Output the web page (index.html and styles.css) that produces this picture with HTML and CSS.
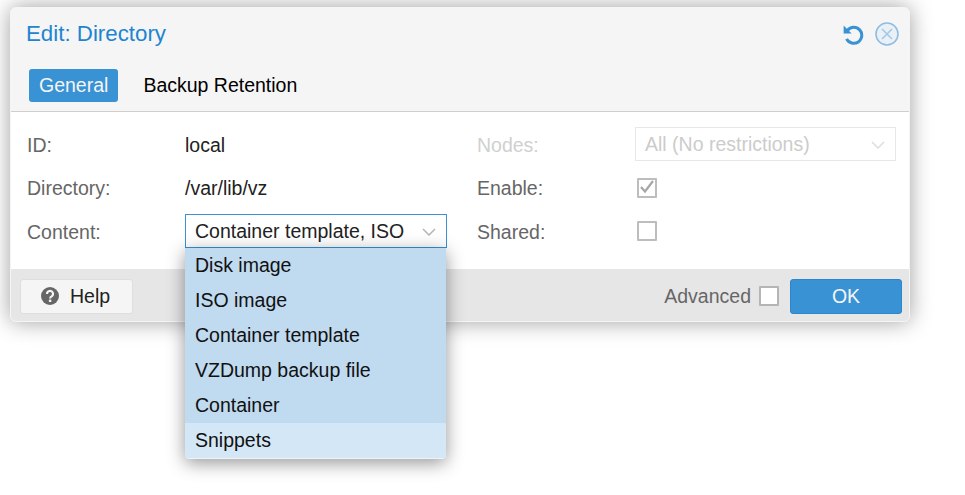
FILE: index.html
```html
<!DOCTYPE html>
<html lang="en">
<head>
  <meta charset="UTF-8">
  <title>Edit: Directory</title>
  <link rel="stylesheet" href="styles.css">
</head>
<body>
  <div class="window">
    <div class="title-bar">
      <span class="title">Edit: Directory</span>
      <svg class="tool-reset" width="22" height="22" viewBox="0 0 22 22">
        <path d="M5.6 7.2A8 8 0 1 1 4.6 15.8" fill="none" stroke="#3892d4" stroke-width="3"/>
        <path d="M1.6 2.4V10.4H9.6Z" fill="#3892d4"/>
      </svg>
      <svg class="tool-close" width="24" height="24" viewBox="0 0 24 24">
        <circle cx="12" cy="12" r="11" fill="#e9f0f6" stroke="#8fbde2" stroke-width="1.6"/>
        <path d="M7 7L17 17M17 7L7 17" stroke="#a3c9e8" stroke-width="1.6"/>
      </svg>
    </div>
    <div class="tabs">
      <span class="tab tab-active">General</span>
      <span class="tab">Backup Retention</span>
    </div>
    <div class="form">
      <div class="column column-left">
        <div class="row"><span class="label">ID:</span><span class="value">local</span></div>
        <div class="row"><span class="label">Directory:</span><span class="value">/var/lib/vz</span></div>
        <div class="row">
          <span class="label">Content:</span>
          <div class="combo combo-focus">
            <span>Container template, ISO</span>
            <svg class="chevron" width="14" height="8" viewBox="0 0 14 8"><path d="M1 1L7 7L13 1" fill="none" stroke="#b5b5b5" stroke-width="1.5"/></svg>
          </div>
        </div>
      </div>
      <div class="column column-right">
        <div class="row">
          <span class="label label-disabled">Nodes:</span>
          <div class="combo combo-disabled">
            <span>All (No restrictions)</span>
            <svg class="chevron" width="14" height="8" viewBox="0 0 14 8"><path d="M1 1L7 7L13 1" fill="none" stroke="#dedede" stroke-width="1.5"/></svg>
          </div>
        </div>
        <div class="row">
          <span class="label">Enable:</span>
          <span class="check">
            <svg width="17" height="17" viewBox="0 0 17 17"><path d="M3 8L7 12.5L15 2" fill="none" stroke="#a6a6a6" stroke-width="2.2"/></svg>
          </span>
        </div>
        <div class="row"><span class="label">Shared:</span><span class="check"></span></div>
      </div>
    </div>
    <div class="footer">
      <button class="btn btn-help">
        <svg width="18" height="18" viewBox="0 0 18 18">
          <circle cx="9" cy="9" r="9" fill="#666"/>
          <path d="M6 7A3 3 0 1 1 10.6 9.4C9.6 10 9.1 10.4 9.1 11.4" fill="none" stroke="#f5f5f5" stroke-width="2.1"/>
          <rect x="7.9" y="12.6" width="2.4" height="2.4" fill="#f5f5f5"/>
        </svg>
        Help
      </button>
      <span class="advanced">Advanced</span>
      <span class="check check-light"></span>
      <button class="btn btn-ok">OK</button>
    </div>
  </div>

  <ul class="dropdown">
    <li>Disk image</li>
    <li>ISO image</li>
    <li>Container template</li>
    <li>VZDump backup file</li>
    <li>Container</li>
    <li class="hover">Snippets</li>
  </ul>
</body>
</html>
```

FILE: styles.css
```css
body { margin: 0; min-height: 100vh; padding: 7px 0 0 10px; box-sizing: border-box; font-family: "Liberation Sans", Arial, sans-serif; font-size: 19.5px; color: #000; }
.window { width: 900px; height: 315px; box-sizing: border-box; border: 1px solid #f5f5f5; border-radius: 6px; background: #f5f5f5; box-shadow: 0 0 22px rgba(0, 0, 0, 0.38); overflow: hidden; display: flex; flex-direction: column; }

.title-bar { display: flex; align-items: center; height: 51px; flex: none; padding: 0 10px 0 15px; }
.title { flex: 1; font-size: 22.3px; color: #1d85d0; }
.tool-reset { margin-right: 11px; }

.tabs { display: flex; align-items: center; gap: 8px; height: 52px; flex: none; padding-left: 18px; border-bottom: 1px solid #cfcfcf; }
.tab { padding: 0 10px 0 17px; line-height: 33px; }
.tab-active { padding: 0 10px; border-radius: 3px; background: #3892d4; color: #f5f5f5; }

.form { display: flex; height: 157px; flex: none; padding: 15px 13px 0 16px; box-sizing: border-box; background: #fff; }
.column { display: flex; flex-direction: column; gap: 9.5px; }
.column-left { width: 450px; }
.column-right { width: 419px; }
.row { display: flex; align-items: center; height: 34px; }
.label { width: 158px; flex: none; padding-top: 2px; color: #666; }
.label-disabled { color: #d0d0d0; }
.value { padding-top: 2px; color: #222; }

.combo { flex: 1; display: flex; align-items: center; justify-content: space-between; height: 34px; padding: 1px 10px 0 9px; box-sizing: border-box; border: 1px solid #ccc; margin-right: 30px; }
.column-right .combo { margin-right: 0; }
.combo-focus { border-color: #3892d4; color: #222; }
.combo-disabled { border-color: #e8e8e8; color: #ccc; }
.chevron { flex: none; }

.check { display: block; width: 20px; height: 20px; box-sizing: border-box; flex: none; margin-left: 2px; border: 2px solid #bdbdbd; border-radius: 1px; background: #fff; }
.check svg { display: block; margin: -1px; }

.footer { flex: 1; display: flex; align-items: center; padding: 2px 7px 0 9px; background: #e6e6e6; }
.btn { height: 35px; box-sizing: border-box; border-radius: 3px; font: inherit; }
.btn-help { display: flex; align-items: center; gap: 11px; width: 113px; padding: 0 0 0 20px; margin-right: auto; border: 1px solid #dedede; background: #f5f5f5; color: #222; }
.advanced { color: #666; margin-right: 6px; }
.check-light { margin-right: 11px; border-color: #b5b5b5; }
.btn-ok { width: 112px; border: 1px solid #2b86cd; background: #3892d4; color: #f5f5f5; }

.dropdown { position: absolute; left: 185px; top: 248px; width: 261px; margin: 0; padding: 0 0 1px; list-style: none; border-radius: 0 0 4px 4px; background: #f2f2f2; box-shadow: 0 4px 18px rgba(0, 0, 0, 0.42); overflow: hidden; }
.dropdown li { height: 35px; line-height: 35px; padding-left: 10px; background: #c0daf0; color: #111; }
.dropdown li.hover { background: #d4e7f6; }
```
